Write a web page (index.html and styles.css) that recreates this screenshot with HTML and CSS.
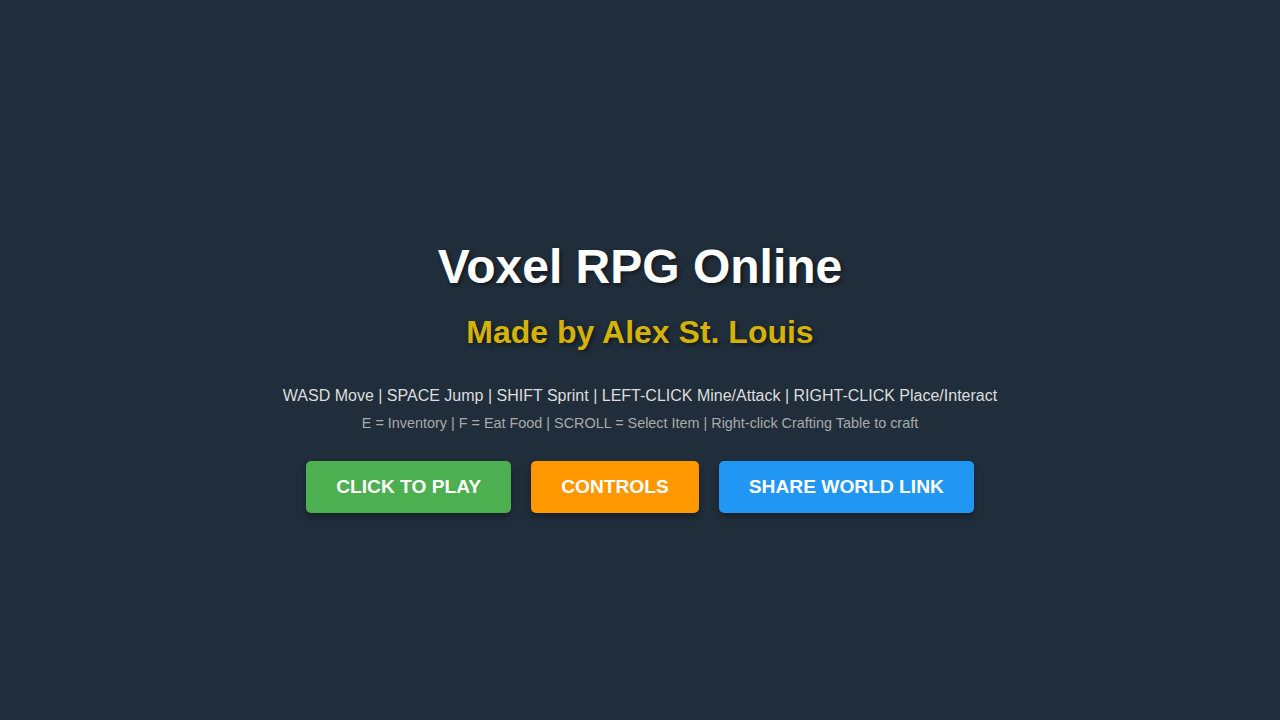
FILE: index.html
```html
<!DOCTYPE html>
<html>
<head>
<meta charset="utf-8">
<link rel="stylesheet" href="styles.css">
</head>
<body>
<div class="screen">
  <h1 class="title">Voxel RPG Online</h1>
  <h2 class="subtitle">Made by Alex St. Louis</h2>
  <p class="controls">WASD Move | SPACE Jump | SHIFT Sprint | LEFT-CLICK Mine/Attack | RIGHT-CLICK Place/Interact</p>
  <p class="hints">E = Inventory | F = Eat Food | SCROLL = Select Item | Right-click Crafting Table to craft</p>
  <div class="buttons">
    <button class="btn btn-play">CLICK TO PLAY</button>
    <button class="btn btn-controls">CONTROLS</button>
    <button class="btn btn-share">SHARE WORLD LINK</button>
  </div>
</div>
</body>
</html>
```
FILE: styles.css
```css
html, body {
  margin: 0;
  padding: 0;
  background: #202e3b;
  font-family: "Liberation Sans", Arial, sans-serif;
}
.screen {
  height: 100vh;
  box-sizing: border-box;
  padding-top: 31px;
  display: flex;
  flex-direction: column;
  align-items: center;
  justify-content: center;
  text-align: center;
}
.title {
  margin: 0;
  font-size: 48px;
  line-height: 55px;
  font-weight: bold;
  color: #ffffff;
  text-shadow: 2px 2px 4px rgba(0, 0, 0, 0.5);
}
.subtitle {
  margin: 20px 0 0;
  font-size: 32px;
  line-height: 37px;
  font-weight: bold;
  color: #d4b20a;
  text-shadow: 2px 2px 4px rgba(0, 0, 0, 0.5);
}
.controls {
  margin: 36px 0 0;
  font-size: 16px;
  line-height: 18px;
  color: #dddddd;
}
.hints {
  margin: 10px 0 0;
  font-size: 14.4px;
  line-height: 16px;
  color: #aaaaaa;
}
.buttons {
  margin-top: 30px;
  display: flex;
  gap: 20px;
}
.btn {
  border: none;
  border-radius: 5px;
  padding: 15px 30px;
  font-family: "Liberation Sans", Arial, sans-serif;
  font-size: 19.2px;
  line-height: 22px;
  font-weight: bold;
  color: #ffffff;
  cursor: pointer;
  box-shadow: 0 4px 6px rgba(0, 0, 0, 0.3);
}
.btn-play { background: #4caf50; }
.btn-controls { background: #ff9800; }
.btn-share { background: #2196f3; }
```
